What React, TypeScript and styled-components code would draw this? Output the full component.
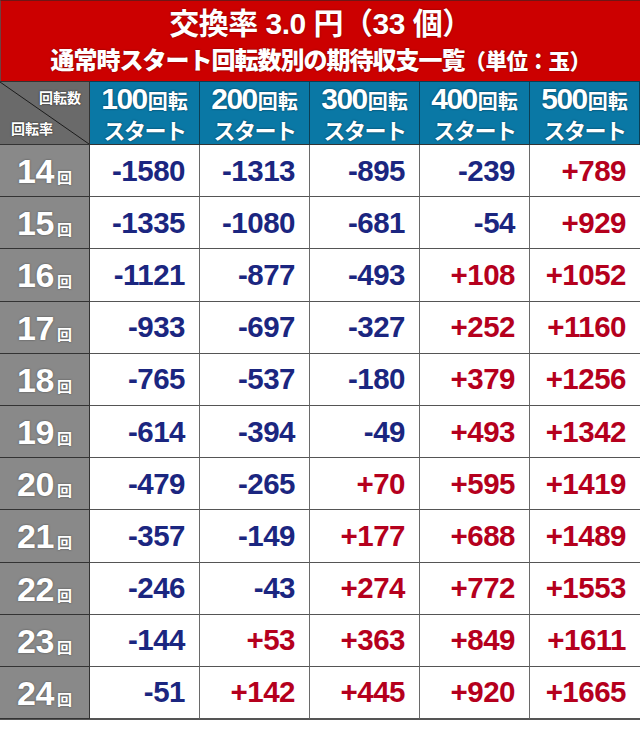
import styled, { createGlobalStyle } from 'styled-components';

const GlobalStyle = createGlobalStyle`
  html, body {
    margin: 0;
    padding: 0;
    background: #ffffff;
  }
`;

const starts = [100, 200, 300, 400, 500];

const rows: { rate: number; values: number[] }[] = [
  { rate: 14, values: [-1580, -1313, -895, -239, 789] },
  { rate: 15, values: [-1335, -1080, -681, -54, 929] },
  { rate: 16, values: [-1121, -877, -493, 108, 1052] },
  { rate: 17, values: [-933, -697, -327, 252, 1160] },
  { rate: 18, values: [-765, -537, -180, 379, 1256] },
  { rate: 19, values: [-614, -394, -49, 493, 1342] },
  { rate: 20, values: [-479, -265, 70, 595, 1419] },
  { rate: 21, values: [-357, -149, 177, 688, 1489] },
  { rate: 22, values: [-246, -43, 274, 772, 1553] },
  { rate: 23, values: [-144, 53, 363, 849, 1611] },
  { rate: 24, values: [-51, 142, 445, 920, 1665] },
];

const formatValue = (v: number) => (v > 0 ? `+${v}` : `${v}`);

export default function App() {
  return (
    <>
      <GlobalStyle />
      <Page>
        <TitleBand>
          <Title>
            交換率 3.0 円（33 個）
          </Title>
          <SubTitle>
            通常時スタート回転数別の期待収支一覧<Unit>（単位：玉）</Unit>
          </SubTitle>
        </TitleBand>
        <Table>
          <CornerCell>
            <Diagonal viewBox="0 0 90 64" preserveAspectRatio="none">
              <line x1="0" y1="0" x2="90" y2="64" stroke="#1a1a1a" strokeWidth="1" />
            </Diagonal>
            <CornerTop>回転数</CornerTop>
            <CornerBottom>回転率</CornerBottom>
          </CornerCell>
          {starts.map((s) => (
            <HeadCell key={s}>
              <HeadLine>
                <HeadNum>{s}</HeadNum>
                <HeadUnit>回転</HeadUnit>
              </HeadLine>
              <HeadSub>スタート</HeadSub>
            </HeadCell>
          ))}
          {rows.map((r) => (
            <Row key={r.rate}>
              <RateCell>
                <RateNum>{r.rate}</RateNum>
                <RateUnit>回</RateUnit>
              </RateCell>
              {r.values.map((v, i) => (
                <ValueCell key={i} $plus={v > 0}>
                  {formatValue(v)}
                </ValueCell>
              ))}
            </Row>
          ))}
        </Table>
      </Page>
    </>
  );
}

const Page = styled.div`
  width: 640px;
  font-family: 'Liberation Sans', 'Noto Sans CJK JP', sans-serif;
`;

const TitleBand = styled.header`
  height: 81px;
  box-sizing: border-box;
  background: #cc0000;
  border-top: 1px solid #6e1616;
  border-left: 1px solid #704040;
  display: flex;
  flex-direction: column;
  align-items: center;
  color: #ffffff;
  font-weight: 700;
  text-shadow: 0 0 2px rgba(60, 0, 0, 0.6);
`;

const Title = styled.h1`
  margin: 4px 0 0;
  font-size: 30px;
  line-height: 38px;
  font-weight: 700;
  font-family: 'Liberation Sans', 'Noto Sans CJK JP', sans-serif;
  letter-spacing: -0.5px;
`;

const SubTitle = styled.div`
  font-size: 24px;
  line-height: 32px;
  letter-spacing: -1px;
  font-weight: 900;
  font-family: 'Noto Sans CJK JP', sans-serif;
`;

const Unit = styled.span`
  font-size: 21.5px;
  letter-spacing: -0.5px;
`;

const Table = styled.div`
  display: grid;
  grid-template-columns: 90px repeat(5, 110px);
  grid-template-rows: 64px repeat(11, 52.2px);
  border-bottom: 1px solid #555555;
`;

const Row = styled.div`
  display: contents;
`;

const CornerCell = styled.div`
  position: relative;
  background: #6a6a6a;
  border-right: 1px solid #333333;
  border-bottom: 1px solid #333333;
  border-top: 1px solid #333333;
  color: #ffffff;
  font-family: 'Noto Sans CJK JP', sans-serif;
  font-weight: 700;
  font-size: 14px;
  text-shadow: 0 0 2px rgba(0, 0, 0, 0.7);
`;

const Diagonal = styled.svg`
  position: absolute;
  inset: 0;
  width: 100%;
  height: 100%;
`;

const CornerTop = styled.span`
  position: absolute;
  top: 5px;
  right: 8px;
`;

const CornerBottom = styled.span`
  position: absolute;
  bottom: 6px;
  left: 11px;
`;

const HeadCell = styled.div`
  background: #0a78a5;
  border-right: 1px solid #0b3e55;
  border-bottom: 1px solid #333333;
  border-top: 1px solid #0b3e55;
  display: flex;
  flex-direction: column;
  align-items: center;
  justify-content: center;
  color: #ffffff;
  font-weight: 700;
  text-shadow: 0 0 2px rgba(0, 30, 50, 0.8);
  &:last-of-type {
    border-right: none;
  }
`;

const HeadLine = styled.div`
  display: flex;
  align-items: baseline;
  line-height: 30px;
`;

const HeadNum = styled.span`
  font-size: 30px;
  letter-spacing: -1.5px;
`;

const HeadUnit = styled.span`
  font-family: 'Noto Sans CJK JP', sans-serif;
  font-size: 20px;
  margin-left: 1px;
`;

const HeadSub = styled.div`
  font-family: 'Noto Sans CJK JP', sans-serif;
  font-size: 22px;
  line-height: 26px;
  letter-spacing: -1.5px;
`;

const RateCell = styled.div`
  background: #898989;
  border-right: 1px solid #333333;
  border-bottom: 1px solid #333333;
  display: flex;
  align-items: baseline;
  justify-content: center;
  padding-top: 8px;
  box-sizing: border-box;
  color: #ffffff;
  font-weight: 700;
  text-shadow: 0 0 2px rgba(0, 0, 0, 0.5);
`;

const RateNum = styled.span`
  font-size: 34px;
  line-height: 36px;
  letter-spacing: -0.5px;
`;

const RateUnit = styled.span`
  font-family: 'Noto Sans CJK JP', sans-serif;
  font-size: 15px;
  margin-left: 3px;
`;

const ValueCell = styled.div<{ $plus: boolean }>`
  border-right: 1px solid #6a6a6a;
  border-bottom: 1px solid #555555;
  display: flex;
  align-items: center;
  justify-content: flex-end;
  padding-right: 14px;
  font-size: 29.5px;
  font-weight: 700;
  letter-spacing: -0.5px;
  color: ${(p) => (p.$plus ? '#b5001d' : '#1b2680')};
  &:last-child {
    border-right: none;
  }
`;
